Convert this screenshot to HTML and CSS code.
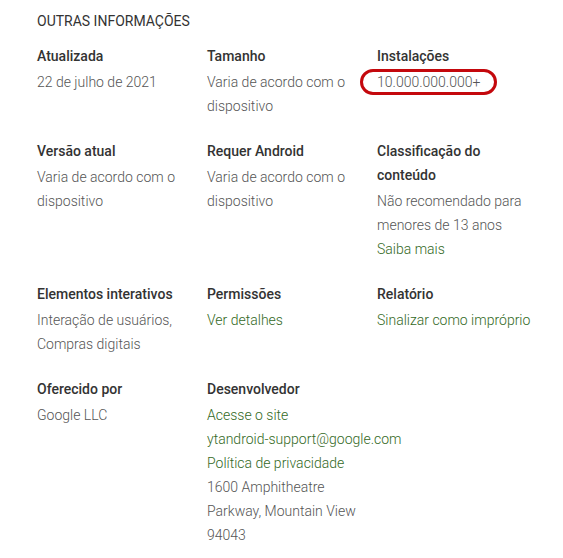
FILE: index.html
```html
<!DOCTYPE html>
<html lang="pt-BR">
<head>
  <meta charset="UTF-8">
  <title>Outras informações</title>
  <link rel="stylesheet" href="styles.css">
</head>
<body>
  <div class="info-section">
    <h2 class="section-title">OUTRAS INFORMAÇÕES</h2>

    <div class="info-grid">
      <div class="info-item">
        <div class="info-label">Atualizada</div>
        <div class="info-value">22 de julho de 2021</div>
      </div>
      <div class="info-item">
        <div class="info-label">Tamanho</div>
        <div class="info-value">Varia de acordo com o dispositivo</div>
      </div>
      <div class="info-item">
        <div class="info-label">Instalações</div>
        <div class="info-value"><span class="circled">10.000.000.000+</span></div>
      </div>

      <div class="info-item">
        <div class="info-label">Versão atual</div>
        <div class="info-value">Varia de acordo com o dispositivo</div>
      </div>
      <div class="info-item">
        <div class="info-label">Requer Android</div>
        <div class="info-value">Varia de acordo com o dispositivo</div>
      </div>
      <div class="info-item">
        <div class="info-label">Classificação do conteúdo</div>
        <div class="info-value">Não recomendado para menores de 13 anos</div>
        <div class="info-value"><a href="#" class="link">Saiba mais</a></div>
      </div>

      <div class="info-item">
        <div class="info-label">Elementos interativos</div>
        <div class="info-value">Interação de usuários, Compras digitais</div>
      </div>
      <div class="info-item">
        <div class="info-label">Permissões</div>
        <div class="info-value"><a href="#" class="link">Ver detalhes</a></div>
      </div>
      <div class="info-item">
        <div class="info-label">Relatório</div>
        <div class="info-value"><a href="#" class="link">Sinalizar como impróprio</a></div>
      </div>

      <div class="info-item">
        <div class="info-label">Oferecido por</div>
        <div class="info-value">Google LLC</div>
      </div>
      <div class="info-item info-wide">
        <div class="info-label">Desenvolvedor</div>
        <div class="info-value"><a href="#" class="link">Acesse o site</a></div>
        <div class="info-value"><a href="#" class="link">ytandroid-support@google.com</a></div>
        <div class="info-value"><a href="#" class="link">Política de privacidade</a></div>
        <div class="info-value address">1600 Amphitheatre Parkway, Mountain View 94043</div>
      </div>
    </div>
  </div>
</body>
</html>
```

FILE: styles.css
```css
body {
  margin: 0;
  background: #fff;
  font-family: Roboto, "Liberation Sans", Arial, sans-serif;
  font-size: 14px;
  color: #333;
}

.info-section {
  padding: 9px 0 0 37px;
}

.section-title {
  margin: 0 0 11px;
  font-size: 14px;
  font-weight: 400;
  line-height: 24px;
  color: #333;
}

.info-grid {
  display: grid;
  grid-template-columns: 170px 170px 170px;
  row-gap: 21px;
}

.info-item {
  padding-right: 10px;
}

.info-label {
  font-weight: 500;
  line-height: 24px;
  color: #333;
  margin-bottom: 2px;
}

.info-value {
  line-height: 24px;
  font-weight: 300;
  color: #555;
}

.info-wide {
  grid-column: span 2;
}

.address {
  width: 155px;
}

.link {
  color: #33691e;
  text-decoration: none;
}

.link:hover {
  text-decoration: underline;
}

/* anotação vermelha em volta do número */
.circled {
  position: relative;
}

.circled::after {
  content: "";
  position: absolute;
  left: -17px;
  right: -17px;
  top: -5px;
  bottom: -5px;
  border: 3px solid #c4080d;
  border-radius: 13px;
}
```
